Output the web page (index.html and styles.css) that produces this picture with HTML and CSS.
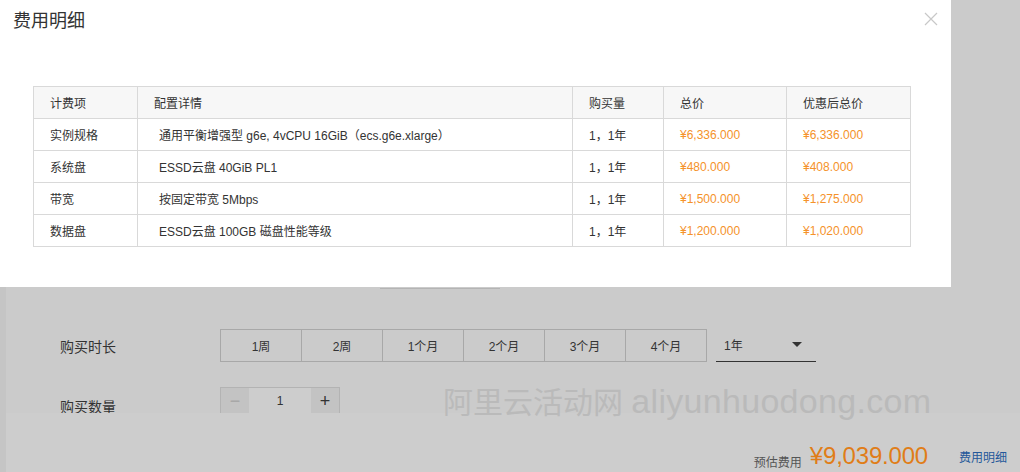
FILE: index.html
```html
<!DOCTYPE html>
<html lang="zh-CN">
<head>
    <meta charset="UTF-8">
    <title>费用明细</title>
    <link rel="stylesheet" href="styles.css">
</head>
<body>

<div class="page">
    <div class="config">
        <div class="tabline"></div>

        <div class="row">
            <div class="label">购买时长</div>
            <div class="periods">
                <div class="period">1周</div>
                <div class="period">2周</div>
                <div class="period">1个月</div>
                <div class="period">2个月</div>
                <div class="period">3个月</div>
                <div class="period">4个月</div>
            </div>
            <div class="select">
                <span>1年</span>
                <span class="caret"></span>
            </div>
        </div>

        <div class="row row-qty">
            <div class="label">购买数量</div>
            <div class="qty">
                <div class="qty-btn minus">−</div>
                <div class="qty-val">1</div>
                <div class="qty-btn plus">+</div>
            </div>
        </div>
    </div>

    <div class="watermark">阿里云活动网 <span class="wm-latin">aliyunhuodong.com</span></div>

    <div class="footer">
        <span class="est-label">预估费用</span>
        <span class="est-price">¥9,039.000</span>
        <a class="detail-link">费用明细</a>
    </div>
</div>

<div class="modal">
    <div class="modal-title">费用明细</div>
    <svg class="close" width="14" height="14" viewBox="0 0 14 14">
        <path d="M1 1 L13 13 M13 1 L1 13" stroke="#c8c8c8" stroke-width="1.2" fill="none"/>
    </svg>

    <table class="fee-table">
        <tr>
            <th class="c1">计费项</th>
            <th class="c2">配置详情</th>
            <th class="c3">购买量</th>
            <th class="c4">总价</th>
            <th class="c5">优惠后总价</th>
        </tr>
        <tr>
            <td>实例规格</td>
            <td class="detail">通用平衡增强型 g6e, 4vCPU 16GiB（ecs.g6e.xlarge）</td>
            <td>1，1年</td>
            <td class="price">¥6,336.000</td>
            <td class="price">¥6,336.000</td>
        </tr>
        <tr>
            <td>系统盘</td>
            <td class="detail">ESSD云盘 40GiB PL1</td>
            <td>1，1年</td>
            <td class="price">¥480.000</td>
            <td class="price">¥408.000</td>
        </tr>
        <tr>
            <td>带宽</td>
            <td class="detail">按固定带宽 5Mbps</td>
            <td>1，1年</td>
            <td class="price">¥1,500.000</td>
            <td class="price">¥1,275.000</td>
        </tr>
        <tr>
            <td>数据盘</td>
            <td class="detail">ESSD云盘 100GB 磁盘性能等级</td>
            <td>1，1年</td>
            <td class="price">¥1,200.000</td>
            <td class="price">¥1,020.000</td>
        </tr>
    </table>
</div>

</body>
</html>
```

FILE: styles.css
```css
body {
    margin: 0;
    height: 472px;
    overflow: hidden;
    background-color: #cbcbcb;
    font-family: "Liberation Sans", "Noto Sans CJK SC", sans-serif;
    color: #333;
}

.page {
    position: relative;
    height: 472px;
    border-left: 6px solid #c5c5c5;
    box-sizing: border-box;
}

.config {
    padding-top: 288px;
    padding-left: 54px;
}

.tabline {
    margin-left: 320px;
    width: 120px;
    border-top: 1px solid #b4b4b4;
}

.row {
    display: flex;
    align-items: center;
    margin-top: 40px;
    height: 33px;
}

.row-qty {
    margin-top: 25px;
    height: 28px;
    align-items: flex-start;
}

.label {
    width: 160px;
    font-size: 14px;
    color: #333;
}

.row-qty .label {
    padding-top: 9px;
}

.periods {
    display: flex;
}

.period {
    width: 82px;
    height: 33px;
    box-sizing: border-box;
    border: 1px solid #a8a8a8;
    margin-left: -1px;
    display: flex;
    align-items: center;
    justify-content: center;
    font-size: 12px;
    color: #333;
}

.period:first-child {
    margin-left: 0;
}

.select {
    margin-left: 9px;
    width: 100px;
    height: 33px;
    box-sizing: border-box;
    border-bottom: 1px solid #333;
    display: flex;
    align-items: center;
    justify-content: space-between;
    padding: 0 14px 2px 8px;
    font-size: 12px;
}

.caret {
    width: 0;
    height: 0;
    border-left: 5px solid transparent;
    border-right: 5px solid transparent;
    border-top: 5px solid #333;
}

.qty {
    display: flex;
    width: 120px;
    height: 28px;
    box-sizing: border-box;
    border: 1px solid #b3b3b3;
}

.qty-btn {
    width: 28px;
    display: flex;
    align-items: center;
    justify-content: center;
    background-color: #c3c3c3;
    font-size: 18px;
}

.minus {
    color: #a8a8a8;
}

.plus {
    color: #333;
}

.qty-val {
    flex: 1;
    display: flex;
    align-items: center;
    justify-content: center;
    font-size: 12px;
    background-color: #cdcdcd;
}

.watermark {
    position: absolute;
    left: 437px;
    top: 378px;
    font-size: 30px;
    color: #bababa;
    white-space: nowrap;
    z-index: 2;
}

.wm-latin {
    font-size: 34px;
    letter-spacing: 0.3px;
}

.footer {
    position: absolute;
    left: 0;
    right: 0;
    bottom: 0;
    height: 59px;
    box-sizing: border-box;
    background-color: #cdcdcd;
    display: flex;
    justify-content: flex-end;
    align-items: center;
    padding: 27px 13px 0 0;
    z-index: 1;
}

.est-label {
    font-size: 12px;
    color: #555;
    margin-top: 10px;
}

.est-price {
    font-size: 24px;
    color: #e07d18;
    margin-left: 8px;
    letter-spacing: -0.2px;
}

.detail-link {
    font-size: 12px;
    color: #24589a;
    margin-left: 31px;
}

.modal {
    position: absolute;
    top: 0;
    left: 0;
    width: 951px;
    height: 287px;
    background-color: #fff;
    z-index: 5;
}

.modal-title {
    padding: 9px 0 0 13px;
    font-size: 18px;
    line-height: 24px;
    color: #333;
}

.close {
    position: absolute;
    top: 12px;
    right: 13px;
}

.fee-table {
    margin: 53px 0 0 33px;
    border-collapse: collapse;
    width: 878px;
    font-size: 12px;
    table-layout: fixed;
}

.fee-table th,
.fee-table td {
    border: 1px solid #d9d9d9;
    height: 31px;
    padding: 0 0 0 16px;
    text-align: left;
    font-weight: normal;
    color: #333;
}

.fee-table th {
    background-color: #f7f7f7;
}

.c1 { width: 87px; }
.c2 { width: 418px; }
.c3 { width: 74px; }
.c4 { width: 106px; }
.c5 { width: 107px; }

.fee-table td.detail {
    padding-left: 21px;
}

.fee-table td.price {
    color: #f5922a;
}
```
